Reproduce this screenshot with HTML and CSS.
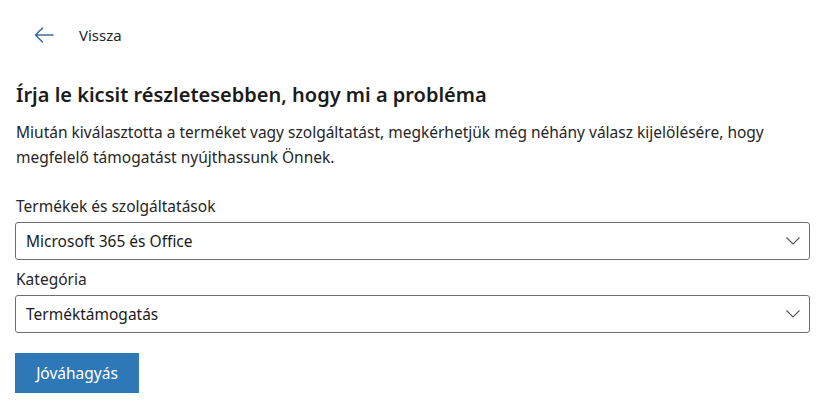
FILE: index.html
```html
<!DOCTYPE html>
<html lang="hu">
<head>
<meta charset="utf-8">
<title>Vissza</title>
<link rel="stylesheet" href="styles.css">
</head>
<body>
<div class="page">
  <a class="back" href="#">
    <svg class="back-icon" width="20" height="16" viewBox="0 0 20 16" aria-hidden="true">
      <path d="M19 8H1.5M8.5 1L1.5 8l7 7" fill="none" stroke="#3f6e9c" stroke-width="1.6" stroke-linecap="round" stroke-linejoin="round"/>
    </svg>
    <span class="back-text">Vissza</span>
  </a>
  <h1 class="title">Írja le kicsit részletesebben, hogy mi a probléma</h1>
  <p class="intro">Miután kiválasztotta a terméket vagy szolgáltatást, megkérhetjük még néhány válasz kijelölésére, hogy megfelelő támogatást nyújthassunk Önnek.</p>
  <form class="form">
    <label class="label">Termékek és szolgáltatások</label>
    <div class="select">
      <span class="select-value">Microsoft 365 és Office</span>
      <svg class="chev" width="14" height="8" viewBox="0 0 14 8" aria-hidden="true"><path d="M0.5 0.5L7 7l6.5-6.5" fill="none" stroke="#555" stroke-width="1.1"/></svg>
    </div>
    <label class="label">Kategória</label>
    <div class="select">
      <span class="select-value">Terméktámogatás</span>
      <svg class="chev" width="14" height="8" viewBox="0 0 14 8" aria-hidden="true"><path d="M0.5 0.5L7 7l6.5-6.5" fill="none" stroke="#555" stroke-width="1.1"/></svg>
    </div>
    <button class="btn" type="button">Jóváhagyás</button>
  </form>
</div>
</body>
</html>
```
FILE: styles.css
```css
* { box-sizing: border-box; }
html, body { margin: 0; background: #fff; }
body {
  font-family: "Noto Sans", "Open Sans", sans-serif;
  color: #1b1b1b;
}
.page {
  padding: 22px 13px 0 15px;
}
.back {
  display: flex;
  align-items: center;
  gap: 25px;
  height: 26px;
  padding-left: 19px;
  text-decoration: none;
  color: #262626;
}
.back-icon { display: block; }
.back-text { font-size: 15px; }
.title {
  margin: 33px 0 0 1px;
  font-size: 20px;
  font-weight: 600;
  line-height: 28px;
  color: #1b1b1b;
}
.intro {
  margin: 11px 0 0 1px;
  font-size: 15.5px;
  line-height: 25px;
  color: #262626;
}
.form {
  display: flex;
  flex-direction: column;
  margin-top: 25px;
}
.label {
  font-size: 15.5px;
  line-height: 22px;
  margin-left: 1px;
  color: #262626;
}
.select {
  display: flex;
  align-items: center;
  justify-content: space-between;
  height: 38px;
  margin: 5px 0 8px;
  padding: 0 9px 0 10px;
  border: 1px solid #6e6e6e;
  border-radius: 3px;
}
.select-value { font-size: 15.5px; color: #1b1b1b; }
.chev { display: block; }
.btn {
  align-self: flex-start;
  margin-top: 12px;
  width: 124px;
  height: 40px;
  border: none;
  border-radius: 0;
  background: #2f78b8;
  color: #fff;
  font-family: inherit;
  font-size: 15.5px;
}
```
